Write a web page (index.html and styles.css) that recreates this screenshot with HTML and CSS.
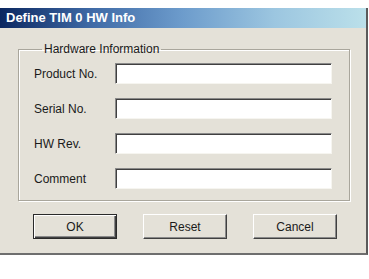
FILE: index.html
```html
<!DOCTYPE html>
<html lang="en">
<head>
    <meta charset="UTF-8">
    <title>Define TIM 0 HW Info</title>
    <link rel="stylesheet" href="styles.css">
</head>
<body>
    <div class="window">
        <div class="title-bar">Define TIM 0 HW Info</div>

        <div class="window-body">
            <fieldset class="group">
                <legend>Hardware Information</legend>
                <div class="field-row">
                    <label for="product">Product No.</label>
                    <input type="text" id="product">
                </div>
                <div class="field-row">
                    <label for="serial">Serial No.</label>
                    <input type="text" id="serial">
                </div>
                <div class="field-row">
                    <label for="hwrev">HW Rev.</label>
                    <input type="text" id="hwrev">
                </div>
                <div class="field-row">
                    <label for="comment">Comment</label>
                    <input type="text" id="comment">
                </div>
            </fieldset>

            <div class="button-row">
                <button class="btn default">OK</button>
                <button class="btn">Reset</button>
                <button class="btn">Cancel</button>
            </div>
        </div>
    </div>
</body>
</html>
```

FILE: styles.css
```css
* {
    margin: 0;
    padding: 0;
    box-sizing: border-box;
}

body {
    background-color: #ffffff;
    font-family: 'Liberation Sans', Arial, sans-serif;
    font-size: 12px;
    color: #1a1a1a;
}

.window {
    margin-top: 8px;
    width: 368px;
    background-color: #e4e1d8;
    border-right: 2px solid #5a5a5a;
    border-bottom: 2px solid #6e6e6e;
}

.title-bar {
    height: 20px;
    line-height: 20px;
    padding-left: 6px;
    font-weight: bold;
    font-size: 13px;
    color: #ffffff;
    background: linear-gradient(to right, #0b2760, #3f6aa6 25%, #6d9ccc 50%, #9cc6e0 75%, #bbe0ea);
}

.window-body {
    padding: 14px 0 14px 18px;
}

.group {
    width: 332px;
    border: 1px solid #a9a69c;
    box-shadow: inset 1px 1px 0 #ffffff, 1px 1px 0 #ffffff;
    padding: 7px 16px 11px 15px;
    display: flex;
    flex-direction: column;
    gap: 14px;
}

.group legend {
    margin-left: 8px;
    padding: 0 2px;
    line-height: 14px;
    color: #1a1a1a;
}

.field-row {
    display: flex;
    align-items: center;
    height: 21px;
}

.field-row label {
    width: 81px;
}

.field-row input {
    width: 217px;
    height: 21px;
    background-color: #ffffff;
    border: 1px solid;
    border-color: #8a8a8a #f6f5f0 #f6f5f0 #8a8a8a;
    box-shadow: inset 1px 1px 0 #404040;
    outline: none;
}

.button-row {
    display: flex;
    gap: 26px;
    margin-top: 13px;
    padding-left: 15px;
}

.btn {
    width: 84px;
    height: 25px;
    font-family: 'Liberation Sans', Arial, sans-serif;
    font-size: 12px;
    color: #1a1a1a;
    background-color: #e4e1d8;
    border: 1px solid;
    border-color: #ffffff #404040 #404040 #ffffff;
    box-shadow: inset -1px -1px 0 #8a8a8a;
}

.btn + .btn {
    margin-left: 0;
}

.btn.default {
    border: 1px solid #2a2a2a;
    box-shadow: inset 1px 1px 0 #ffffff, inset -1px -1px 0 #404040, inset -2px -2px 0 #8a8a8a;
}
```
